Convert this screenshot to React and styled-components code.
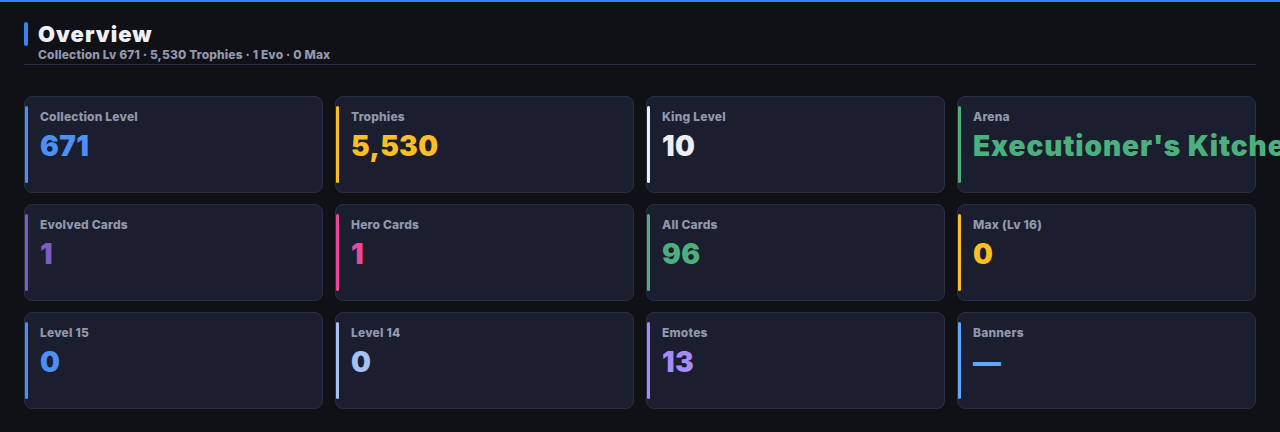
import React from "react";
import styled, { createGlobalStyle } from "styled-components";

const Global = createGlobalStyle`
  html, body { margin: 0; padding: 0; background: #101116; }
  body { font-family: "Inter", "Noto Sans", sans-serif; }
`;

const Page = styled.div`
  min-height: 432px;
  box-sizing: border-box;
  border-top: 2px solid #3b82f6;
  padding: 18px 24px 24px;
  background: #101116;
  overflow: hidden;
`;

const Header = styled.header`
  border-bottom: 1px solid #2a2e45;
  padding-bottom: 3px;
  margin-bottom: 31px;
`;

const TitleRow = styled.div`
  display: flex;
  align-items: center;
  gap: 10px;
  height: 28px;
`;

const Accent = styled.span`
  width: 4px;
  height: 24px;
  border-radius: 2px;
  background: #3b82f6;
`;

const Title = styled.h1`
  margin: 0;
  font-size: 22px;
  line-height: 28px;
  font-weight: 900;
  color: #eef0f6;
  letter-spacing: 1px;
`;

const Sub = styled.div`
  margin-left: 14px;
  font-size: 12px;
  line-height: 13px;
  font-weight: 800;
  color: #9298ad;
  letter-spacing: 0.15px;
`;

const Grid = styled.div`
  display: grid;
  grid-template-columns: repeat(4, minmax(0, 1fr));
  gap: 11px 12px;
`;

const Card = styled.div`
  position: relative;
  height: 97px;
  box-sizing: border-box;
  background: #1b1e2e;
  border: 1px solid #2a2e45;
  border-radius: 8px;
  padding: 12px 15px;
  display: flex;
  flex-direction: column;
  white-space: nowrap;
`;

const Bar = styled.span`
  position: absolute;
  left: 0;
  top: 9px;
  bottom: 9px;
  width: 3px;
  border-radius: 2px;
  background: ${(p) => p.$c};
`;

const Label = styled.div`
  font-size: 12px;
  line-height: 16px;
  font-weight: 800;
  color: #9298ad;
  letter-spacing: 0.2px;
`;

const Value = styled.div`
  font-size: 28px;
  line-height: 36px;
  font-weight: 900;
  color: ${(p) => p.$c};
  letter-spacing: ${(p) => (p.$wide ? "0.9px" : "0.3px")};
  margin-top: 3px;
`;

const items = [
  ["Collection Level", "671", "#4d8ff5"],
  ["Trophies", "5,530", "#fbbf24"],
  ["King Level", "10", "#eceef5"],
  ["Arena", "Executioner's Kitchen", "#4bb07d", true],
  ["Evolved Cards", "1", "#7c5cc4"],
  ["Hero Cards", "1", "#ec4899"],
  ["All Cards", "96", "#4bb07d"],
  ["Max (Lv 16)", "0", "#fbbf24"],
  ["Level 15", "0", "#4d8ff5"],
  ["Level 14", "0", "#a6c1f0"],
  ["Emotes", "13", "#a78bfa"],
  ["Banners", "—", "#60a5fa"],
];

export default function App() {
  return (
    <>
      <Global />
      <Page>
        <Header>
          <TitleRow>
            <Accent />
            <Title>Overview</Title>
          </TitleRow>
          <Sub>Collection Lv 671 · 5,530 Trophies · 1 Evo · 0 Max</Sub>
        </Header>
        <Grid>
          {items.map(([l, v, c, wide]) => (
            <Card key={l}>
              <Bar $c={c} />
              <Label>{l}</Label>
              <Value $c={c} $wide={wide}>{v}</Value>
            </Card>
          ))}
        </Grid>
      </Page>
    </>
  );
}
